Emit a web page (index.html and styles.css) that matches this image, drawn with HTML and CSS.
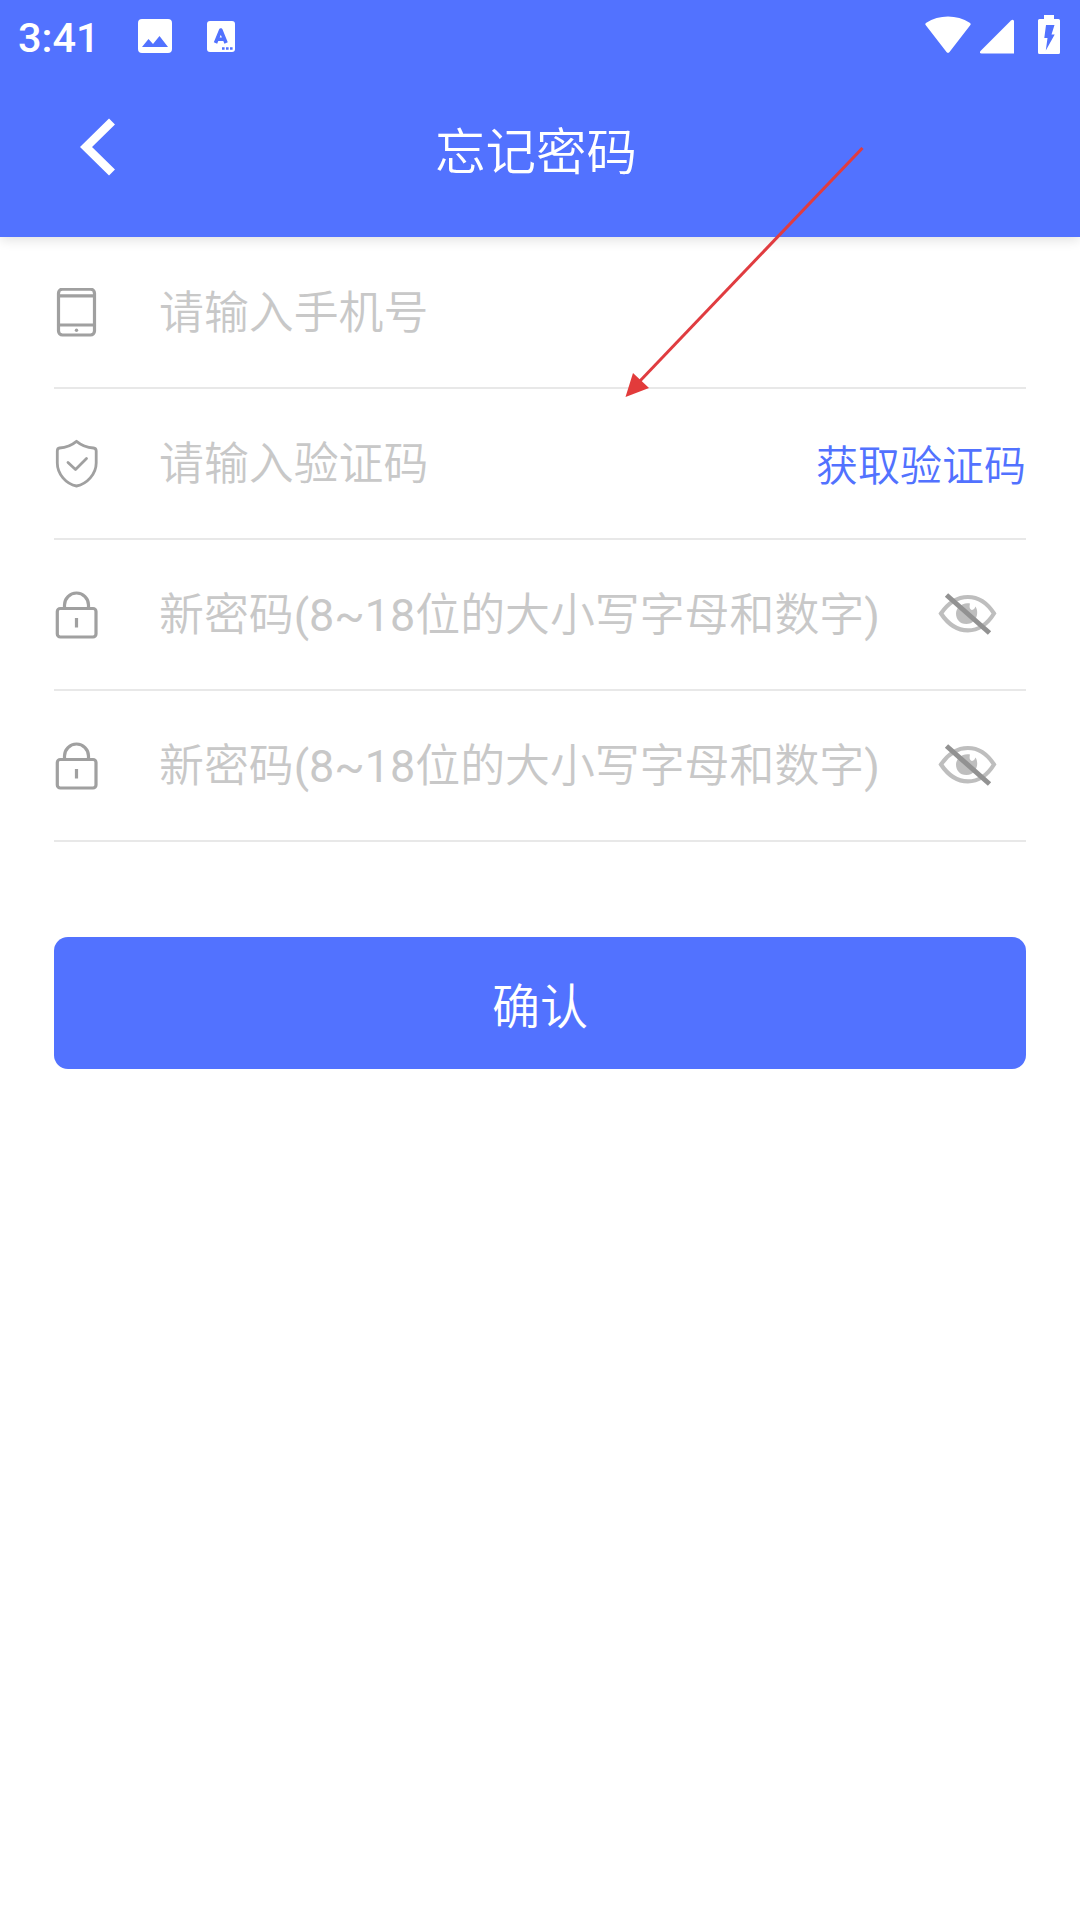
FILE: index.html
```html
<!DOCTYPE html>
<html lang="zh-CN">

<head>
  <meta charset="UTF-8">
  <meta name="viewport" content="width=device-width, initial-scale=1.0">
  <title>忘记密码</title>
  <link rel="stylesheet" href="styles.css">
</head>

<body>
  <header class="header">
    <div class="status-bar">
      <span class="time">3:41</span>
      <svg class="icon-image" width="34" height="34" viewBox="0 0 34 34">
        <path fill="#fff" fill-rule="evenodd" d="M4 0h26a4 4 0 0 1 4 4v26a4 4 0 0 1-4 4H4a4 4 0 0 1-4-4V4a4 4 0 0 1 4-4zM4 28h26l-8.500-11-6.500 8-4.500-5z" />
      </svg>
      <svg class="icon-letter" width="28" height="31" viewBox="0 0 28 31">
        <rect width="28" height="31" rx="3" fill="#fff" />
        <path d="M8.500 22L13.800 9l5.300 13M10.500 18.300h6.600" fill="none" stroke="#5272ff" stroke-width="3.600" stroke-linejoin="round" />
        <path d="M15 26.200h2.600v2.600H15zM19 26.200h2.600v2.600H19zM23 26.200h2.600v2.600H23z" fill="#5272ff" />
      </svg>
      <div class="status-right">
        <svg width="46" height="40" viewBox="0 0 46 40">
          <path fill="#fff" d="M1 10.500C0 9.500 0 8.500 1.300 7.700C14-.6 32-.6 44.700 7.700C46 8.500 46 9.500 45 10.500L24.500 37Q23 38.700 21.500 37Z" />
        </svg>
        <svg class="icon-signal" width="34" height="40" viewBox="0 0 34 40">
          <path fill="#fff" d="M34 6v32.500H1.500q-2.500-.5-1-2.500L31 5.500q2-1.500 3 .5z" />
        </svg>
        <svg class="icon-battery" width="22" height="40" viewBox="0 0 22 40">
          <path fill="#fff" d="M6 0h10v4h4.500q1.500 0 1.500 1.500v32q0 1.500-1.500 1.500h-19Q0 39 0 37.500v-32Q0 4 1.500 4H6z" />
          <path fill="#5272ff" d="M8 10h8.500l-3 9.500h3.200L7.800 35.500 9.500 23H6.300z" />
        </svg>
      </div>
    </div>
    <div class="nav-bar">
      <svg class="back" width="36" height="58" viewBox="0 0 36 58">
        <path d="M32 3.500L6 29 32 54.500" fill="none" stroke="#fff" stroke-width="8.500" />
      </svg>
      <h1 class="title">忘记密码</h1>
    </div>
  </header>

  <form class="form">
    <div class="field">
      <svg class="icon" width="44" height="49" viewBox="0 0 44 49">
        <rect x="4.500" y="1.200" width="36" height="45.800" rx="4" />
        <path d="M4.500 7.800h36M4.500 37h36" />
        <circle class="dot" cx="22.500" cy="42.300" r="1.700" />
      </svg>
      <input type="text" placeholder="请输入手机号">
    </div>
    <div class="field">
      <svg class="icon icon-thin" width="44" height="49" viewBox="0 0 44 49">
        <path d="M22.500 2.300C18 6 13 8.500 5.500 9Q3.300 9.300 3.300 12V24C3.300 35 12 45 22.500 47C33 45 42.200 35 42.200 24V12Q42.200 9.300 39.500 9C32 8.500 27 6 22.500 2.300Z" />
        <path d="M14 23.500l7.500 7L32.500 19.500" />
      </svg>
      <input type="text" placeholder="请输入验证码">
      <button type="button" class="code-btn">获取验证码</button>
    </div>
    <div class="field">
      <svg class="icon" width="44" height="49" viewBox="0 0 44 49">
        <rect x="3.300" y="18.500" width="38.700" height="28.500" rx="3" />
        <path class="bar" d="M10.500 18.500V15a12 12 0 0 1 24 0v3.500M22.500 28v9.500" />
      </svg>
      <input type="text" placeholder="新密码(8~18位的大小写字母和数字)">
      <svg class="eye" width="60" height="49" viewBox="0 0 60 49">
        <path class="lid" d="M3 23.500C18 1.500 42 1.500 56 23.500C42 46 18 46 3 23.500Z" />
        <path class="pupil" d="M32 13.500c-1 4 0 6 2 6.500 2-.5 3-2 3.500-3.500 4 6 1 17.500-9 17.500-7 0-10.500-5-10.500-10.500s6-11.500 14-10z" />
        <path class="slash" d="M8.500 5l43 38" />
      </svg>
    </div>
    <div class="field">
      <svg class="icon" width="44" height="49" viewBox="0 0 44 49">
        <rect x="3.300" y="18.500" width="38.700" height="28.500" rx="3" />
        <path class="bar" d="M10.500 18.500V15a12 12 0 0 1 24 0v3.500M22.500 28v9.500" />
      </svg>
      <input type="text" placeholder="新密码(8~18位的大小写字母和数字)">
      <svg class="eye" width="60" height="49" viewBox="0 0 60 49">
        <path class="lid" d="M3 23.500C18 1.500 42 1.500 56 23.500C42 46 18 46 3 23.500Z" />
        <path class="pupil" d="M32 13.500c-1 4 0 6 2 6.500 2-.5 3-2 3.500-3.500 4 6 1 17.500-9 17.500-7 0-10.500-5-10.500-10.500s6-11.500 14-10z" />
        <path class="slash" d="M8.500 5l43 38" />
      </svg>
    </div>
    <button type="button" class="submit">确认</button>
  </form>

  <!-- red pointer over the page -->
  <svg class="arrow" width="240" height="252" viewBox="0 0 240 252">
    <path d="M237.500 1L14 235" stroke="#e03c40" stroke-width="3" />
    <path d="M.5 250l7.500-24 16 15z" fill="#e23b3b" />
  </svg>
</body>

</html>
```
FILE: styles.css
```css
* {
  box-sizing: border-box;
}

body {
  margin: 0;
  min-height: 1920px;
  background: #fff;
  font-family: Roboto, "Noto Sans CJK SC DemiLight", "Noto Sans CJK SC", sans-serif;
}

svg {
  display: block;
  flex: none;
}

.header {
  position: relative;
  height: 237px;
  background: #5272ff;
  box-shadow: 0 2px 12px rgba(0, 0, 0, 0.14);
}

.status-bar {
  display: flex;
  align-items: center;
  height: 72px;
  padding: 0 20px 0 18px;
  color: #fff;
}

.time {
  width: 120px;
  font-size: 41.5px;
  font-weight: 500;
  line-height: 48px;
  padding-top: 3px;
}

.icon-letter {
  margin-left: 35px;
}

.status-right {
  display: flex;
  margin: -2px 0 0 auto;
}

.icon-signal {
  margin-left: 9px;
}

.icon-battery {
  margin-left: 24px;
}

.nav-bar {
  display: flex;
  align-items: center;
  height: 150px;
  padding-left: 80px;
}

.title {
  flex: 1;
  margin: 0;
  padding: 11px 124px 0 0;
  color: #fff;
  font-size: 50.5px;
  font-weight: 400;
  line-height: 74px;
  text-align: center;
}

.form {
  padding: 1px 54px 0;
}

.field {
  display: flex;
  align-items: center;
  height: 151px;
  border-bottom: 2px solid #e8e8e8;
}

.icon {
  fill: none;
  stroke: #a0a0a0;
  stroke-width: 3.2;
  stroke-linecap: round;
  stroke-linejoin: round;
}

.icon-thin {
  stroke-width: 2.8;
}

.bar {
  stroke-linecap: butt;
}

.dot {
  fill: #a0a0a0;
  stroke: none;
}

input {
  flex: 1;
  min-width: 0;
  height: 149px;
  margin-left: 61px;
  padding: 1px 0 0;
  border: none;
  outline: none;
  background: none;
  font-family: inherit;
  font-size: 44.9px;
}

input::placeholder {
  color: #c8c8c8;
  opacity: 1;
}

button {
  padding: 0;
  border: none;
  font-family: inherit;
}

.code-btn {
  padding-bottom: 2px;
  background: none;
  color: #5272ff;
  font-size: 42px;
}

.eye {
  margin-right: 28px;
  fill: none;
}

.lid {
  stroke: #bebebe;
  stroke-width: 4.2;
}

.pupil {
  fill: #bebebe;
}

.slash {
  stroke: #929292;
  stroke-width: 5;
}

.submit {
  width: 100%;
  height: 132px;
  margin-top: 95px;
  border-radius: 14px;
  background: #5272ff;
  color: #fff;
  font-size: 48px;
}

.arrow {
  position: absolute;
  top: 147px;
  left: 625px;
}
```
